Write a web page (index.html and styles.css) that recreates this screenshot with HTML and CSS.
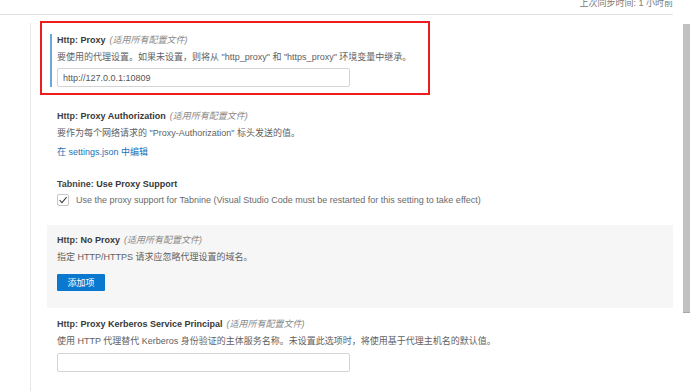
FILE: index.html
```html
<html>
<head>
  <meta charset="UTF-8"/>
  <title>设置 - 代理</title>
  <link rel="stylesheet" href="styles.css">
</head>
<body>
<div class="window">
  <div class="pane">
    <div class="sync-bar"><span class="sync-text">上次同步时间: 1 小时前</span></div>
    <div class="body">
      <div class="toc"></div>
      <div class="list">

        <div class="setting focused s1">
          <div class="mark"></div>
          <div class="title"><span class="cat">Http: </span><span class="label">Proxy</span><span class="scope">(适用所有配置文件)</span></div>
          <div class="desc">要使用的代理设置。如果未设置，则将从 "http_proxy" 和 "https_proxy" 环境变量中继承。</div>
          <input class="text-input" type="text" value="http://127.0.0.1:10809">
        </div>

        <div class="setting s2">
          <div class="title"><span class="cat">Http: </span><span class="label">Proxy Authorization</span><span class="scope">(适用所有配置文件)</span></div>
          <div class="desc">要作为每个网络请求的 "Proxy-Authorization" 标头发送的值。</div>
          <div class="edit-link">在 settings.json 中编辑</div>
        </div>

        <div class="setting s3">
          <div class="title"><span class="cat">Tabnine: </span><span class="label">Use Proxy Support</span></div>
          <div class="check-row">
            <span class="checkbox">
              <svg width="10" height="10" viewBox="0 0 10 10"><path d="M1.6 5.2 L4 7.6 L8.6 2.2" fill="none" stroke="#424242" stroke-width="1.1"/></svg>
            </span>
            <span class="check-text">Use the proxy support for Tabnine (Visual Studio Code must be restarted for this setting to take effect)</span>
          </div>
        </div>

        <div class="setting hover s4">
          <div class="title"><span class="cat">Http: </span><span class="label">No Proxy</span><span class="scope">(适用所有配置文件)</span></div>
          <div class="desc">指定 HTTP/HTTPS 请求应忽略代理设置的域名。</div>
          <button class="add-btn">添加项</button>
        </div>

        <div class="setting s5">
          <div class="title"><span class="cat">Http: </span><span class="label">Proxy Kerberos Service Principal</span><span class="scope">(适用所有配置文件)</span></div>
          <div class="desc">使用 HTTP 代理替代 Kerberos 身份验证的主体服务名称。未设置此选项时，将使用基于代理主机名的默认值。</div>
          <input class="text-input" type="text" value="">
        </div>

      </div>
    </div>
  </div>
  <div class="scroll"><div class="thumb"></div></div>
</div>
</body>
</html>
```

FILE: styles.css
```css
html, body {margin: 0; padding: 0; background: #ffffff; overflow: hidden}
body {font: 9px "Liberation Sans", "Noto Sans CJK SC", sans-serif; color: #616161}

.window {display: flex; width: 690px; height: 391px}
.pane {width: 673px; display: flex; flex-direction: column}

.sync-bar {height: 14px; border-bottom: 1px solid #e3e3e3; display: flex; justify-content: flex-end; overflow: hidden}
.sync-text {line-height: 12px; margin-top: -3px; color: #7a7a7a}

.body {flex: 1; display: flex; padding-top: 8px}
.toc {width: 30px; border-right: 1px solid #e8e8e8}
.list {flex: 1; padding-left: 16px}

.setting {position: relative; padding: 7px 10px 10px 10px}
.s1 {padding-top: 9px; padding-bottom: 14px}
.s2 {padding-bottom: 8px}
.s3 {padding-bottom: 19px}
.s4 {padding-bottom: 17px}
.s5 {padding-top: 8px}
.hover {background: #f6f6f6}

.focused::before {content: ""; position: absolute; left: 3px; top: 11px; bottom: 14px; width: 2px; background: #6aa8dc}
.mark {position: absolute; left: -7px; top: -2px; width: 386px; height: 70px; border: 2px solid #ee1c1c}

.title {line-height: 17px; white-space: nowrap}
.cat {color: #444444; font-weight: bold}
.label {color: #383838; font-weight: bold}
.scope {font-style: italic; color: #8a8a8a; margin-left: 4px}
.desc {line-height: 17px; white-space: nowrap}

.text-input {display: block; box-sizing: border-box; width: 293px; height: 19px; margin-top: 2px; padding: 0 5px;
  border: 1px solid #d4d4d4; border-radius: 2px; background: #ffffff;
  font: 9px "Liberation Sans", "Noto Sans CJK SC", sans-serif; color: #555555; outline: none}
.s5 .text-input {margin-top: 3px}

.edit-link {line-height: 17px; margin-top: 2px; color: #1c72b8}

.check-row {display: flex; align-items: center; gap: 7px; margin-top: 1px; height: 12px}
.checkbox {box-sizing: border-box; width: 12px; height: 12px; border: 1px solid #c6c6c6; border-radius: 2px;
  display: flex; align-items: center; justify-content: center; background: #ffffff}
.check-text {color: #6a6a6a; white-space: nowrap}

.add-btn {display: block; margin-top: 8px; width: 48px; height: 17px; padding: 0; border: none; border-radius: 1px;
  background: #0a78cf; color: #ffffff; font: 9px "Liberation Sans", "Noto Sans CJK SC", sans-serif}

.scroll {flex: 1; padding: 24px 0 0 10px}
.thumb {height: 288px; background: #c1c1c1; border-bottom: 1px solid #a9a9a9}
```
